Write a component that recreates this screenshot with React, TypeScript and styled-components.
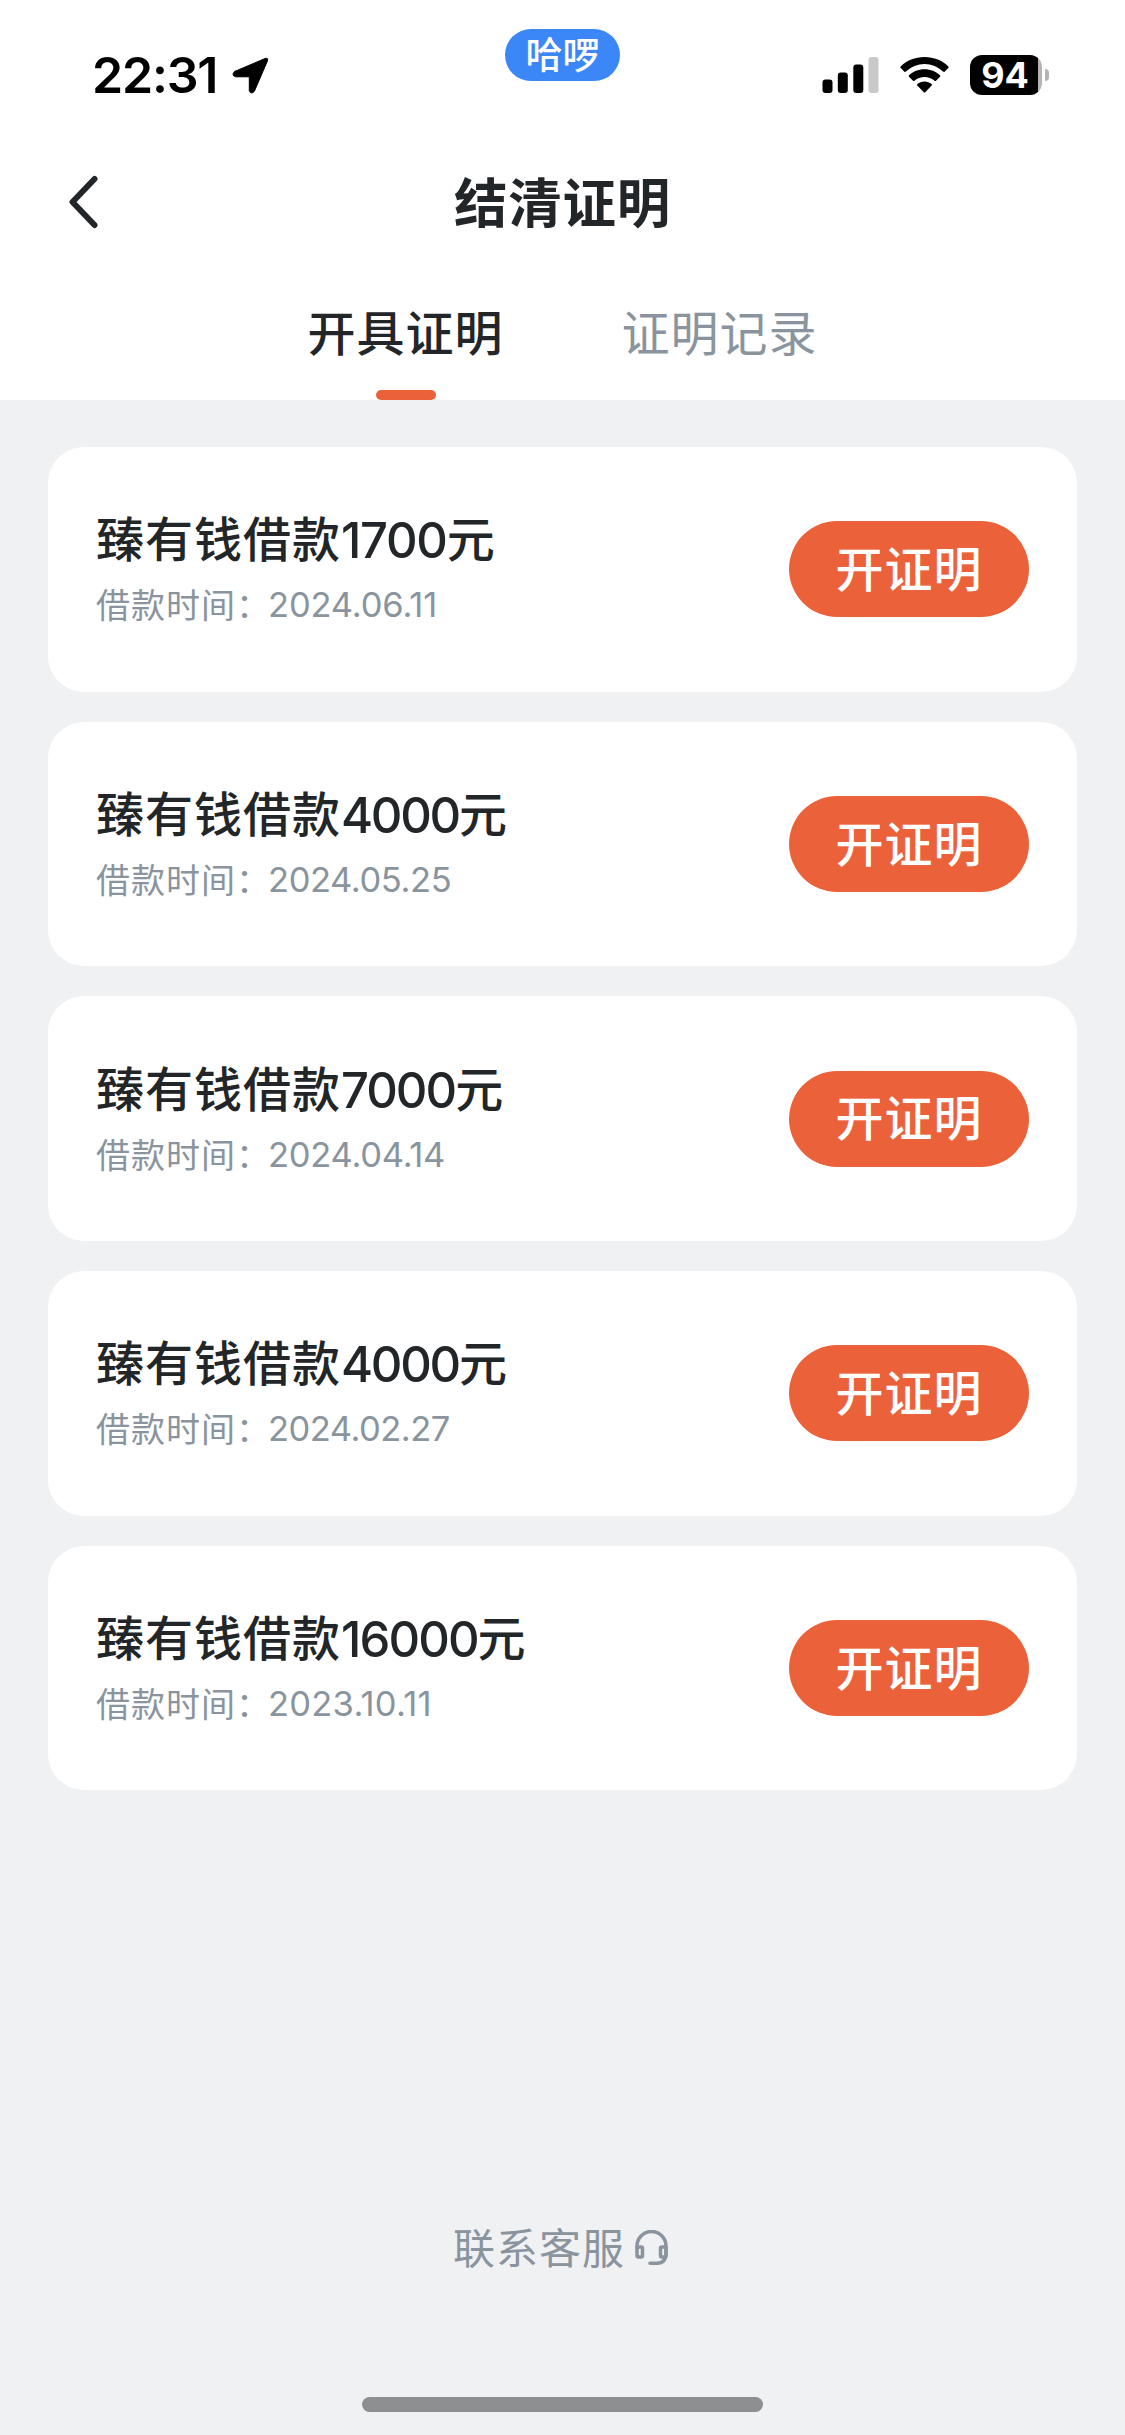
import React from "react";
import styled, { createGlobalStyle } from "styled-components";

const ink = "#232628";
const muted = "#8a949e";
const accent = "#eb6139";
const cjk = `"Noto Sans CJK SC", sans-serif`;

const GlobalStyle = createGlobalStyle`
  * { box-sizing: border-box; }
  body { margin: 0; background: #f0f1f3; font-family: Inter, ${cjk}; }
`;

const Screen = styled.div`
  width: 1125px;
  height: 2435px;
  display: flex;
  flex-direction: column;
  background: #f0f1f3;
  overflow: hidden;
`;

const Header = styled.header`
  height: 400px;
  background: #fff;
  display: flex;
  flex-direction: column;
`;

const StatusBar = styled.div`
  height: 150px;
  display: grid;
  grid-template-columns: 1fr 115px 1fr;
  align-items: start;
`;

const Clock = styled.div`
  display: flex;
  align-items: center;
  height: 60px;
  margin-top: 45px;
  padding-left: 92px;
  gap: 17px;
  color: #000;
  font: 600 50px/60px Inter, sans-serif;
`;

const Time = styled.span`
  width: 123px;
  letter-spacing: -1.2px;
  white-space: nowrap;
`;

const AppPill = styled.div`
  height: 52px;
  margin-top: 29px;
  border-radius: 26px;
  background: #3c87f7;
  color: #fff;
  text-align: center;
  font: 500 37px/49px ${cjk};
`;

const Indicators = styled.div`
  display: flex;
  justify-content: flex-end;
  align-items: center;
  height: 60px;
  margin-top: 45px;
  padding-right: 76px;
`;

const Signal = styled.svg`
  margin-right: 21px;
`;

const Wifi = styled.svg`
  margin-right: 21px;
`;

const Battery = styled.div`
  display: flex;
  align-items: center;
  gap: 3px;
`;

const BatteryBody = styled.div`
  width: 72px;
  height: 40px;
  border-radius: 12px;
  background: linear-gradient(to right, #000 68px, #b4b4b4 68px);
  padding-right: 2px;
  text-align: center;
  color: #fff;
  font: 700 36px/40px Inter, sans-serif;
`;

const BatteryCap = styled.div`
  width: 4px;
  height: 12px;
  border-radius: 0 4px 4px 0;
  background: #b4b4b4;
`;

const NavBar = styled.div`
  height: 104px;
  display: grid;
  grid-template-columns: 200px 1fr 200px;
  align-items: center;
`;

const BackButton = styled.button`
  border: 0;
  background: none;
  padding: 0 0 0 66px;
  height: 104px;
  display: flex;
  align-items: center;
`;

const PageTitle = styled.h1`
  margin: 0;
  text-align: center;
  color: ${ink};
  font: 700 53.5px/99px ${cjk};
  height: 104px;
  letter-spacing: 0.7px;
`;

const Tabs = styled.nav`
  height: 146px;
  display: flex;
  justify-content: center;
  gap: 118px;
  padding-top: 36px;
`;

const Tab = styled.div<{ $active?: boolean }>`
  display: flex;
  flex-direction: column;
  align-items: center;
  justify-content: space-between;
  color: ${(p) => (p.$active ? ink : muted)};
  font: ${(p) => (p.$active ? 500 : 400)} 48px/80px ${cjk};
  letter-spacing: 1px;
`;

const TabMarker = styled.span`
  width: 60px;
  height: 10px;
  margin-left: 2px;
  border-radius: 5px;
  background: ${accent};
`;

const List = styled.main`
  flex: 1;
  display: flex;
  flex-direction: column;
  gap: 30px;
  padding: 47px 48px 0;
`;

const Card = styled.article`
  height: 244.7px;
  border-radius: 36px;
  background: #fff;
  display: flex;
  align-items: center;
  justify-content: space-between;
  padding: 0 48px;
`;

const Info = styled.div`
  height: 128px;
  display: flex;
  flex-direction: column;
  justify-content: space-between;
`;

const Row = styled.div`
  display: flex;
  white-space: nowrap;
`;

const LoanRow = styled(Row)`
  height: 64px;
  color: ${ink};
  font: 500 48px/63px ${cjk};
  letter-spacing: 1px;
`;

const Amount = styled.span<{ $tracking: number }>`
  padding-top: 4px;
  font-family: Inter, sans-serif;
  font-size: 49px;
  letter-spacing: ${(p) => p.$tracking}px;
`;

const DateRow = styled(Row)`
  height: 59px;
  color: ${muted};
  font: 400 34px/60px ${cjk};
  letter-spacing: 1px;
`;

const DateText = styled.span<{ $tracking: number }>`
  margin-left: -3px;
  padding-top: 1px;
  font-family: Inter, sans-serif;
  font-size: 34.5px;
  letter-spacing: ${(p) => p.$tracking}px;
`;

const IssueButton = styled.button`
  width: 240px;
  height: 96px;
  border: 0;
  border-radius: 48px;
  padding: 0 0 7px;
  background: ${accent};
  color: #fff;
  font: 500 48px/86px ${cjk};
  letter-spacing: 1px;
`;

const Support = styled.footer`
  display: flex;
  justify-content: center;
  align-items: center;
  gap: 10px;
  height: 80px;
  padding-right: 4px;
  color: ${muted};
  font: 400 42px/78px ${cjk};
  letter-spacing: 1px;
`;

const SupportLabel = styled.span`
  padding-bottom: 2px;
`;

const SupportIcon = styled.svg`
  margin-top: 2px;
`;

const HomeArea = styled.div`
  height: 148px;
  display: flex;
  justify-content: center;
  align-items: flex-end;
  padding-bottom: 23px;
`;

const HomeIndicator = styled.div`
  width: 401px;
  height: 15px;
  border-radius: 8px;
  background: #8e8f91;
`;

const loans = [
  { amount: "1700", date: "2024.06.11", amountTracking: -1.3, dateTracking: -0.15 },
  { amount: "4000", date: "2024.05.25", amountTracking: -2.3, dateTracking: -0.4 },
  { amount: "7000", date: "2024.04.14", amountTracking: -2, dateTracking: -0.25 },
  { amount: "4000", date: "2024.02.27", amountTracking: -2.3, dateTracking: -0.5 },
  { amount: "16000", date: "2023.10.11", amountTracking: -1.9, dateTracking: 0.25 },
];

export default function App() {
  return (
    <Screen>
      <GlobalStyle />
      <Header>
        <StatusBar>
          <Clock>
            <Time>22:31</Time>
            <svg width="38" height="38" viewBox="0 0 38 38">
              <path
                d="M2.5 15.5 33 2.6Q36.5 1.4 35.4 5L22.4 35.2Q18.7 39 17.3 34.6V20.8H3.6Q-.8 19.3 2.5 15.5Z"
                fill="#000"
                stroke="#000"
                strokeWidth="1"
                strokeLinejoin="round"
              />
            </svg>
          </Clock>
          <AppPill>哈啰</AppPill>
          <Indicators>
            <Signal width="57" height="36" viewBox="0 0 57 36">
              <rect x="0.500" y="22.5" width="10" height="13.5" rx="3" />
              <rect x="15.800" y="15.5" width="10" height="20.5" rx="3" />
              <rect x="31.300" y="7.5" width="10" height="28.5" rx="3" />
              <rect x="46.5" y="0" width="10" height="36" rx="3" fill="#c9c9c9" />
            </Signal>
            <Wifi width="49" height="36" viewBox="0 0 49 36">
              <path d="M24.5 0C34 0 42.500 3.500 48.300 9.400Q49 10.200 48.300 11L44.600 14.700Q43.900 15.300 43.100 14.600A26.800 26.800 0 0 0 5.900 14.600Q5.100 15.300 4.400 14.700L.7 11Q0 10.200 .7 9.400C6.500 3.500 15 0 24.500 0Z" />
              <path d="M24.500 12.200C30.700 12.200 36 14.500 40 18.200Q40.700 19 40 19.700L36 23.700Q35.300 24.300 34.500 23.700A15.500 15.500 0 0 0 14.500 23.700Q13.700 24.300 13 23.700L9 19.700Q8.300 19 9 18.200C13 14.500 18.300 12.200 24.500 12.200Z" />
              <path d="M24.500 24.500C27.300 24.500 29.700 25.400 31.600 26.900Q32.500 27.700 31.700 28.500L25.200 35.200Q24.500 36 23.800 35.200L17.300 28.500Q16.500 27.700 17.400 26.900C19.300 25.400 21.700 24.500 24.500 24.500Z" />
            </Wifi>
            <Battery>
              <BatteryBody>94</BatteryBody>
              <BatteryCap />
            </Battery>
          </Indicators>
        </StatusBar>
        <NavBar>
          <BackButton aria-label="返回">
            <svg width="34" height="56" viewBox="0 0 34 56">
              <path
                d="M28.500 5 6.500 28 28.500 51"
                fill="none"
                stroke={ink}
                strokeWidth="6"
                strokeLinecap="round"
                strokeLinejoin="round"
              />
            </svg>
          </BackButton>
          <PageTitle>结清证明</PageTitle>
        </NavBar>
        <Tabs>
          <Tab $active>
            开具证明
            <TabMarker />
          </Tab>
          <Tab>证明记录</Tab>
        </Tabs>
      </Header>
      <List>
        {loans.map((loan) => (
          <Card key={loan.date}>
            <Info>
              <LoanRow>
                臻有钱借款<Amount $tracking={loan.amountTracking}>{loan.amount}</Amount>元
              </LoanRow>
              <DateRow>
                借款时间：<DateText $tracking={loan.dateTracking}>{loan.date}</DateText>
              </DateRow>
            </Info>
            <IssueButton>开证明</IssueButton>
          </Card>
        ))}
      </List>
      <Support>
        <SupportLabel>联系客服</SupportLabel>
        <SupportIcon width="33" height="36" viewBox="0 0 33 36" fill="none" stroke={muted} strokeWidth="3.500">
          <path d="M2 18V16A14.500 14.500 0 0 1 31 16V23Q31 33.300 22 33.300H15" strokeLinecap="round" />
          <rect x="2" y="17" width="5.500" height="10" rx="1.500" />
          <rect x="25.500" y="17" width="5.500" height="10" rx="1.500" />
        </SupportIcon>
      </Support>
      <HomeArea>
        <HomeIndicator />
      </HomeArea>
    </Screen>
  );
}
